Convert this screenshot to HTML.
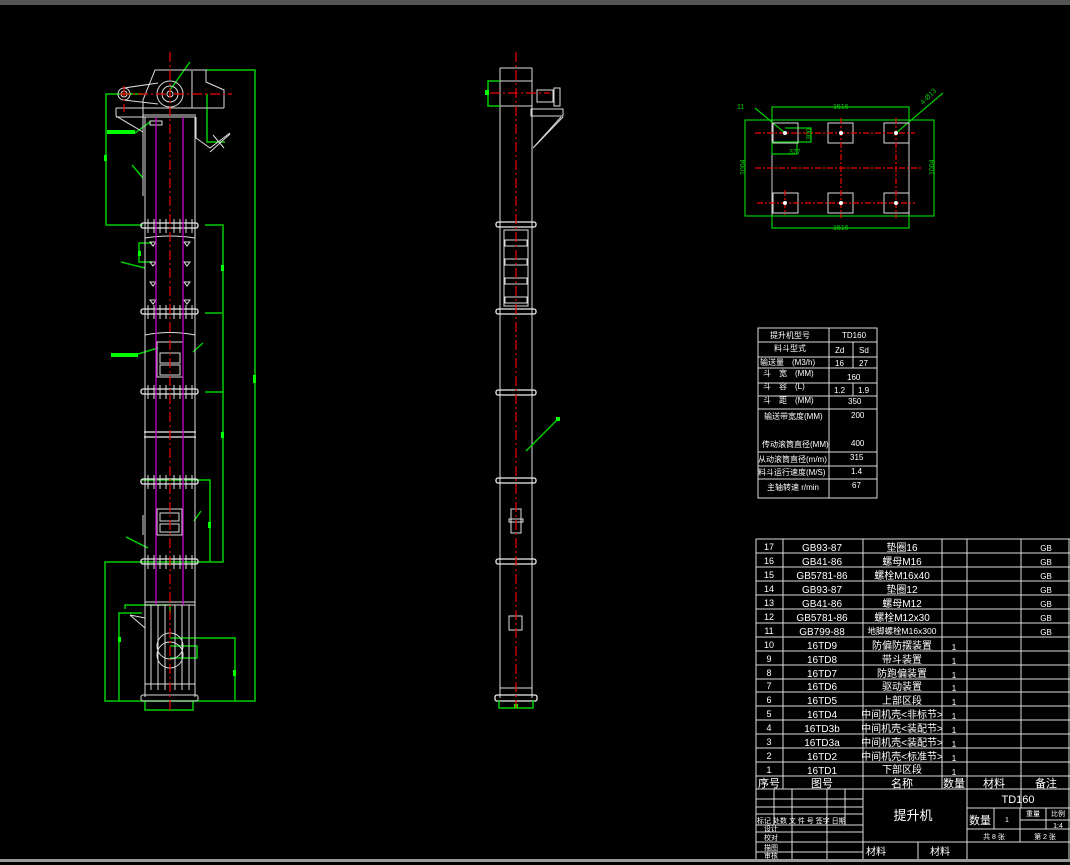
<!DOCTYPE html>
<html><head><meta charset="utf-8"><style>
html,body{margin:0;padding:0;background:#000;overflow:hidden}
svg{display:block}
text{font-family:"Liberation Sans","Noto Sans CJK SC",sans-serif;fill:#fff}
</style></head><body>
<svg width="1070" height="865" viewBox="0 0 1070 865" xmlns="http://www.w3.org/2000/svg">
<rect width="1070" height="865" fill="#000"/>
<rect x="0" y="0" width="1070" height="5" fill="#555"/>
<rect x="0" y="859" width="1070" height="3" fill="#999"/>

<!-- LEFT TOWER -->
<g fill="none" stroke-width="1">
<!-- green dims -->
<g stroke="#0c0" stroke-width="1.5">
<polyline points="206,70 255,70 255,701 105,701 105,562 223,562 223,225 205,225"/>
<polyline points="143,94 106,94 106,225 143,225"/>
<polyline points="205,94 205,94"/>
<polyline points="205,94 205,94"/>
<line x1="170" y1="90" x2="190" y2="62"/>
<line x1="135" y1="133" x2="150" y2="122"/>
<line x1="132" y1="165" x2="143" y2="178"/>
<polyline points="207,94 207,142 225,142"/>
<line x1="121" y1="262" x2="145" y2="268"/>
<polyline points="152,243 139,243 139,262 152,262"/>
<line x1="205" y1="313" x2="222" y2="313"/>
<line x1="138" y1="354" x2="158" y2="348"/>
<line x1="193" y1="352" x2="203" y2="343"/>
<line x1="205" y1="392" x2="223" y2="392"/>
<polyline points="142,480 210,480 210,562"/>
<line x1="126" y1="537" x2="148" y2="548"/>
<line x1="194" y1="521" x2="201" y2="511"/>
<polyline points="119,701 119,613 142,613"/>
<polyline points="125,609 125,605 170,605 170,613"/>
<polyline points="170,646 197,646 197,658 170,658"/>
<polyline points="170,638 235,638 235,701"/>
<polyline points="145,701 145,710 193,710 193,701"/>
</g>
<g fill="#0f0">
<rect x="107" y="130" width="28" height="4"/>
<rect x="111" y="353" width="27" height="4"/>
<rect x="104" y="155" width="3" height="6"/><rect x="253" y="375" width="3" height="8"/>
<rect x="221" y="265" width="3" height="6"/><rect x="221" y="432" width="3" height="6"/>
<rect x="208" y="522" width="3" height="6"/><rect x="233" y="670" width="3" height="6"/>
<rect x="118" y="637" width="3" height="5"/><rect x="138" y="251" width="3" height="5"/>
</g>
<!-- casing -->
<g stroke="#ddd">
<polyline points="143,196 143,100 155,70 206,70 206,82 224,90 224,108"/>
<line x1="192" y1="71" x2="192" y2="108"/>
<line x1="116" y1="108" x2="224" y2="108"/>
<line x1="116" y1="117" x2="196" y2="117"/>
<line x1="143" y1="115" x2="196" y2="115"/>
<polyline points="116,108 116,116 143,132"/>
<circle cx="170" cy="94" r="13"/><circle cx="170" cy="94" r="8"/><circle cx="170" cy="94" r="3"/>
<circle cx="124" cy="94" r="6"/><circle cx="124" cy="94" r="3"/>
<polyline points="124,88 158,83"/><polyline points="124,100 158,104"/>
<polyline points="196,117 196,138 210,148 230,133"/>
<line x1="210" y1="152" x2="230" y2="134"/><line x1="213" y1="135" x2="224" y2="148"/>
<line x1="145" y1="117" x2="145" y2="225"/><line x1="195" y1="117" x2="195" y2="225"/>
<rect x="150" y="121" width="12" height="4"/>
<line x1="145" y1="225" x2="145" y2="697"/><line x1="195" y1="225" x2="195" y2="697"/>
<g stroke="#eee" stroke-width="1.3">
<rect x="141" y="223" width="57" height="5" rx="2"/>
<rect x="141" y="309" width="57" height="5" rx="2"/>
<rect x="141" y="389" width="57" height="5" rx="2"/>
<rect x="141" y="479" width="57" height="5" rx="2"/>
<rect x="141" y="559" width="57" height="5" rx="2"/>
<line x1="144" y1="432" x2="196" y2="432"/><line x1="144" y1="437" x2="196" y2="437"/>
</g>
<path d="M148,219v14M154,219v14M160,219v14M166,219v14M174,219v14M180,219v14M186,219v14M192,219v14M148,305v14M154,305v14M160,305v14M166,305v14M174,305v14M180,305v14M186,305v14M192,305v14M148,385v14M154,385v14M160,385v14M166,385v14M174,385v14M180,385v14M186,385v14M192,385v14M148,475v14M154,475v14M160,475v14M166,475v14M174,475v14M180,475v14M186,475v14M192,475v14M148,555v14M154,555v14M160,555v14M166,555v14M174,555v14M180,555v14M186,555v14M192,555v14"/>
<path d="M145,238 Q170,234 195,238M145,335 Q170,330 195,335"/>
<path d="M150,242h6l-3,4zM150,262h6l-3,4zM150,282h6l-3,4zM150,300h6l-3,4zM184,242h6l-3,4zM184,262h6l-3,4zM184,282h6l-3,4zM184,300h6l-3,4z"/>
<rect x="157" y="342" width="26" height="35"/><rect x="160" y="353" width="20" height="10"/><rect x="160" y="365" width="20" height="10"/>
<rect x="157" y="509" width="25" height="26"/><rect x="160" y="513" width="19" height="8"/><rect x="160" y="524" width="19" height="8"/>
<line x1="143" y1="515" x2="143" y2="535"/>
<line x1="145" y1="602" x2="195" y2="602"/><line x1="145" y1="605" x2="195" y2="605"/>
<path d="M151,605v85M158,605v85M165,605v85M175,605v85M182,605v85M189,605v85"/>
<line x1="145" y1="684" x2="195" y2="684"/>
<circle cx="170" cy="646" r="13"/><circle cx="170" cy="655" r="13"/>
<line x1="130" y1="615" x2="145" y2="618"/><line x1="130" y1="615" x2="145" y2="628"/>
<rect x="141" y="695" width="57" height="6" rx="2"/>
</g>
<g stroke="#c0c" stroke-width="1.3"><line x1="156" y1="117" x2="156" y2="605"/><line x1="183" y1="117" x2="183" y2="605"/></g>
<g stroke="#e00" stroke-dasharray="10,3,2,3" stroke-width="1.2">
<line x1="170" y1="52" x2="170" y2="712"/>
<line x1="120" y1="94" x2="232" y2="94"/>
<line x1="124" y1="86" x2="124" y2="112"/>
</g>
</g>

<!-- MIDDLE TOWER -->
<g fill="none">
<g stroke="#ddd">
<line x1="500" y1="68" x2="532" y2="68"/>
<line x1="500" y1="68" x2="500" y2="698"/><line x1="532" y1="68" x2="532" y2="698"/>
<line x1="500" y1="81" x2="532" y2="81"/><line x1="500" y1="106" x2="532" y2="106"/>
<rect x="537" y="90" width="16" height="12"/>
<rect x="554" y="88" width="6" height="18"/>
<rect x="531" y="109" width="32" height="7"/>
<line x1="533" y1="148" x2="561" y2="117"/><line x1="535" y1="146" x2="563" y2="117"/>
<g stroke="#eee" stroke-width="1.3">
<rect x="496" y="222" width="40" height="5" rx="2"/>
<rect x="496" y="309" width="40" height="5" rx="2"/>
<rect x="496" y="390" width="40" height="5" rx="2"/>
<rect x="496" y="478" width="40" height="5" rx="2"/>
<rect x="496" y="559" width="40" height="5" rx="2"/>
<rect x="495" y="695" width="42" height="6" rx="2"/>
</g>
<rect x="504" y="230" width="24" height="76"/>
<rect x="505" y="240" width="22" height="6"/><rect x="505" y="259" width="22" height="6"/>
<rect x="505" y="278" width="22" height="6"/><rect x="505" y="297" width="22" height="6"/>
<rect x="511" y="509" width="10" height="24"/><rect x="509" y="519" width="14" height="3"/>
<rect x="509" y="616" width="13" height="14"/>
<line x1="500" y1="688" x2="532" y2="688"/>
</g>
<g stroke="#0c0" stroke-width="1.5">
<polyline points="500,81 488,81 488,106 500,106"/>
<line x1="526" y1="451" x2="558" y2="419"/>
<polyline points="499,700 499,708 533,708 533,700"/>
</g>
<g fill="#0f0"><rect x="485" y="90" width="4" height="5"/><rect x="556" y="417" width="4" height="4"/><rect x="514" y="704" width="4" height="4"/></g>
<g stroke="#e00" stroke-dasharray="10,3,2,3" stroke-width="1.2">
<line x1="516" y1="52" x2="516" y2="708"/><line x1="490" y1="93" x2="550" y2="93"/>
</g>
</g>

<!-- PLAN VIEW -->
<g fill="none">
<rect x="772" y="120" width="137" height="96" stroke="#ccc"/>
<g stroke="#0c0" stroke-width="1.2">
<rect x="745" y="120" width="189" height="96"/>
<polyline points="772,120 772,107 909,107 909,120"/>
<polyline points="772,216 772,228 909,228 909,216"/>
<polyline points="785,128 811,128 811,142 772,142"/>
<line x1="785" y1="133" x2="755" y2="108"/>
<line x1="896" y1="133" x2="943" y2="93"/>
<polyline points="772,142 772,154 797,154 797,142"/>
</g>
<g stroke="#ddd">
<rect x="773" y="123" width="25" height="20"/><rect x="828" y="123" width="25" height="20"/><rect x="884" y="123" width="25" height="20"/>
<rect x="773" y="193" width="25" height="20"/><rect x="828" y="193" width="25" height="20"/><rect x="884" y="193" width="25" height="20"/>
</g>
<g stroke="#e00" stroke-dasharray="6,2,2,2" stroke-width="1.2">
<line x1="755" y1="133" x2="915" y2="133"/><line x1="755" y1="168" x2="922" y2="168"/><line x1="757" y1="203" x2="915" y2="203"/>
<line x1="785" y1="190" x2="785" y2="215"/><line x1="841" y1="118" x2="841" y2="218"/><line x1="896" y1="118" x2="896" y2="218"/>
</g>
<g fill="#fff"><circle cx="785" cy="133" r="2"/><circle cx="841" cy="133" r="2"/><circle cx="896" cy="133" r="2"/><circle cx="785" cy="203" r="2"/><circle cx="841" cy="203" r="2"/><circle cx="896" cy="203" r="2"/></g>
</g>
<g style="fill:#0c0" font-size="7">
<text x="833" y="109" style="fill:#0c0">1516</text>
<text x="833" y="230" style="fill:#0c0">1516</text>
<text x="737" y="109" style="fill:#0c0">11</text>
<text x="789" y="154" style="fill:#0c0">377</text>
<text transform="translate(811,140) rotate(-90)" style="fill:#0c0">300</text>
<text transform="translate(745,175) rotate(-90)" style="fill:#0c0">1004</text>
<text transform="translate(934,175) rotate(-90)" style="fill:#0c0">1004</text>
<text transform="translate(923,105) rotate(-45)" style="fill:#0c0">4-Ø13</text>
</g>

<!-- PARAM TABLE -->
<g fill="none" stroke="#ddd">
<rect x="758" y="328" width="119" height="170"/>
<path d="M829,328V498M758,342H877M758,357H877M758,368H877M758,383H877M758,396H877M758,409H877M758,452H877M758,466H877M758,479H877M853,342V368M853,383V396"/>
</g>
<g font-size="8">
<text x="770" y="338">提升机型号</text><text x="842" y="338">TD160</text>
<text x="774" y="351">料斗型式</text><text x="835" y="353">Zd</text><text x="859" y="353">Sd</text>
<text x="760" y="365">输送量　(M3/h)</text><text x="835" y="366">16</text><text x="859" y="366">27</text>
<text x="763" y="376">斗　宽　(MM)</text><text x="847" y="380">160</text>
<text x="763" y="389">斗　容　(L)</text><text x="834" y="393">1.2</text><text x="858" y="393">1.9</text>
<text x="763" y="403">斗　距　(MM)</text><text x="848" y="404">350</text>
<text x="764" y="419">输送带宽度(MM)</text><text x="851" y="418">200</text>
<text x="762" y="447">传动滚筒直径(MM)</text><text x="851" y="446">400</text>
<text x="758" y="462">从动滚筒直径(m/m)</text><text x="850" y="460">315</text>
<text x="758" y="475">料斗运行速度(M/S)</text><text x="851" y="474">1.4</text>
<text x="767" y="490">主轴转速 r/min</text><text x="852" y="488">67</text>
</g>

<!-- PARTS TABLE -->
<g fill="none" stroke="#ddd">
<path d="M756,539H1070M756,539V859M783,539V789M863,539V859M942,539V789M967,539V859M1021,539V808M1069,539V859"/>
<path d="M756,553H1070M756,567H1070M756,581H1070M756,595H1070M756,609H1070M756,623H1070M756,637H1070M756,651H1070M756,665H1070M756,679H1070M756,692H1070M756,706H1070M756,720H1070M756,734H1070M756,748H1070M756,762H1070M756,776H1070M756,789H1070"/>
<path d="M756,799H863M756,807H863M756,814H863M756,825H863M756,832H863M756,842H863M756,852H863M774,789V825M792,789V859M827,789V859M845,789V825"/>
<path d="M967,808H1070M967,829H1070M967,842H1070M994,808V829M1020,808V842M1046,808V829M1020,820H1070M863,842H967M918,842V859"/>
</g>
<g font-size="10" text-anchor="middle">
<text x="769" y="550" font-size="9">17</text><text x="822" y="551">GB93-87</text><text x="902" y="551">垫圈16</text><text x="1046" y="551" font-size="8">GB</text>
<text x="769" y="564" font-size="9">16</text><text x="822" y="565">GB41-86</text><text x="902" y="565">螺母M16</text><text x="1046" y="565" font-size="8">GB</text>
<text x="769" y="578" font-size="9">15</text><text x="822" y="579">GB5781-86</text><text x="902" y="579">螺栓M16x40</text><text x="1046" y="579" font-size="8">GB</text>
<text x="769" y="592" font-size="9">14</text><text x="822" y="593">GB93-87</text><text x="902" y="593">垫圈12</text><text x="1046" y="593" font-size="8">GB</text>
<text x="769" y="606" font-size="9">13</text><text x="822" y="607">GB41-86</text><text x="902" y="607">螺母M12</text><text x="1046" y="607" font-size="8">GB</text>
<text x="769" y="620" font-size="9">12</text><text x="822" y="621">GB5781-86</text><text x="902" y="621">螺栓M12x30</text><text x="1046" y="621" font-size="8">GB</text>
<text x="769" y="634" font-size="9">11</text><text x="822" y="635">GB799-88</text><text x="902" y="634" font-size="8.5">地脚螺栓M16x300</text><text x="1046" y="635" font-size="8">GB</text>
<text x="769" y="648" font-size="9">10</text><text x="822" y="649">16TD9</text><text x="902" y="649">防偏防摆装置</text><text x="954" y="650" font-size="8">1</text>
<text x="769" y="662" font-size="9">9</text><text x="822" y="663">16TD8</text><text x="902" y="663">带斗装置</text><text x="954" y="664" font-size="8">1</text>
<text x="769" y="676" font-size="9">8</text><text x="822" y="677">16TD7</text><text x="902" y="677">防跑偏装置</text><text x="954" y="678" font-size="8">1</text>
<text x="769" y="689" font-size="9">7</text><text x="822" y="690">16TD6</text><text x="902" y="690">驱动装置</text><text x="954" y="691" font-size="8">1</text>
<text x="769" y="703" font-size="9">6</text><text x="822" y="704">16TD5</text><text x="902" y="704">上部区段</text><text x="954" y="705" font-size="8">1</text>
<text x="769" y="717" font-size="9">5</text><text x="822" y="718">16TD4</text><text x="902" y="718">中间机壳&lt;非标节&gt;</text><text x="954" y="719" font-size="8">1</text>
<text x="769" y="731" font-size="9">4</text><text x="822" y="732">16TD3b</text><text x="902" y="732">中间机壳&lt;装配节&gt;</text><text x="954" y="733" font-size="8">1</text>
<text x="769" y="745" font-size="9">3</text><text x="822" y="746">16TD3a</text><text x="902" y="746">中间机壳&lt;装配节&gt;</text><text x="954" y="747" font-size="8">1</text>
<text x="769" y="759" font-size="9">2</text><text x="822" y="760">16TD2</text><text x="902" y="760">中间机壳&lt;标准节&gt;</text><text x="954" y="761" font-size="8">1</text>
<text x="769" y="773" font-size="9">1</text><text x="822" y="774">16TD1</text><text x="902" y="773">下部区段</text><text x="954" y="775" font-size="8">1</text>
<text x="769" y="787" font-size="11">序号</text><text x="822" y="787" font-size="11">图号</text><text x="902" y="787" font-size="11">名称</text><text x="954" y="787" font-size="11">数量</text><text x="994" y="787" font-size="11">材料</text><text x="1046" y="787" font-size="11">备注</text>
<text x="913" y="820" font-size="13">提升机</text>
<text x="1018" y="803" font-size="11">TD160</text>
<text x="980" y="824" font-size="11">数量</text><text x="1007" y="822" font-size="7">1</text>
<text x="1033" y="816" font-size="7">重量</text><text x="1058" y="816" font-size="7">比例</text><text x="1058" y="828" font-size="7">1:4</text>
<text x="994" y="839" font-size="7">共 8 张</text><text x="1045" y="839" font-size="7">第 2 张</text>
<text x="876" y="855" font-size="10">材料</text><text x="940" y="855" font-size="10">材料</text>
</g>
<g font-size="7">
<text x="757" y="823">标记 处数 文 件 号 签字 日期</text>
<text x="764" y="831">设计</text><text x="764" y="840">校对</text><text x="764" y="850">描图</text><text x="764" y="858">审核</text>
</g>
</svg>
</body></html>
